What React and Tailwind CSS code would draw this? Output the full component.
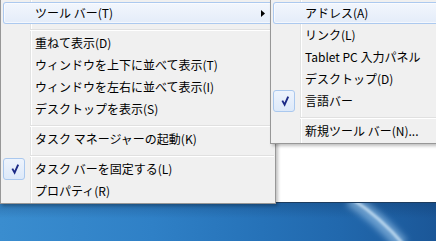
import React from "react";

const Check = () => (
  <div className="w-[22px] h-[22px] shrink-0 rounded-[3px] border border-[#aac8ee] bg-[linear-gradient(to_bottom,#eef4fd,#dde9f9)] flex items-center justify-center">
    <svg width="20" height="20" viewBox="0 0 20 20">
      <path d="M8.3 9.6 L10.6 13.6 L14.2 5.6" fill="none" stroke="#1c2a86" strokeWidth="1.9" strokeLinejoin="miter" />
    </svg>
  </div>
);

const Item = ({ label, checked, hl, arrow }) => (
  <div
    className={
      "mx-[2px] h-[22px] flex items-center text-[12px] leading-none text-black " +
      (hl
        ? "rounded-[3px] bg-[linear-gradient(to_bottom,#f3f7fd,#e3ecf9)] shadow-[inset_0_0_0_1px_#acc9ef,inset_0_0_0_2px_rgba(255,255,255,0.6)]"
        : "")
    }
  >
    {checked ? <Check /> : <div className="w-[22px] shrink-0" />}
    <span className="ml-[10px] whitespace-nowrap flex-1">{label}</span>
    {arrow && (
      <svg width="4" height="7" viewBox="0 0 4 7" className="mr-[8px]">
        <path d="M0 0 L4 3.5 L0 7 Z" fill="#000" />
      </svg>
    )}
  </div>
);

const Sep = () => (
  <div className="h-[8px] pt-[5px] ml-[29px] mr-[1px]">
    <div className="h-px bg-[#e0e0e0]" />
    <div className="h-px bg-white" />
  </div>
);

const menuBg =
  "bg-[#f0f0f0] bg-[linear-gradient(to_right,#f0f0f0_29px,#e2e3e3_29px,#e2e3e3_30px,#ffffff_30px,#ffffff_31px,#f0f0f0_31px)]";

export default function App() {
  return (
    <div className="relative w-[436px] h-[241px] overflow-hidden bg-white flex flex-col font-['Noto_Sans_CJK_JP','Noto_Sans',sans-serif]">
      <div className="flex-1" />
      <div className="h-[39px] border-t border-[#1d3c5e] bg-[linear-gradient(to_right,#3a8dcf_0%,#2f80c6_35%,#2672b8_60%,#2168ad_78%,#1b5798_100%)]">
        <svg width="436" height="38" viewBox="0 0 436 38" className="block">
          <defs>
            <linearGradient id="v" x1="0" y1="0" x2="0" y2="1">
              <stop offset="0" stopColor="#0a2a55" stopOpacity="0.25" />
              <stop offset="0.4" stopColor="#0a2a55" stopOpacity="0" />
            </linearGradient>
            <filter id="b" x="-50%" y="-50%" width="200%" height="200%">
              <feGaussianBlur stdDeviation="3" />
            </filter>
            <filter id="b2" x="-50%" y="-50%" width="200%" height="200%">
              <feGaussianBlur stdDeviation="1.2" />
            </filter>
          </defs>
          <rect width="436" height="38" fill="url(#v)" />
          <path d="M350 -4 Q378 14 402 42" fill="none" stroke="#a9d2f2" strokeOpacity="0.55" strokeWidth="14" filter="url(#b)" />
          <path d="M352 -4 Q380 14 404 42" fill="none" stroke="#d8ecfb" strokeOpacity="0.7" strokeWidth="3" filter="url(#b2)" />
        </svg>
      </div>

      {/* main context menu */}
      <div
        className={
          "absolute left-0 top-[-1px] w-[276px] border border-[#979797] pt-[2px] pb-[1px] shadow-[2px_2px_3px_rgba(0,0,0,0.25)] " +
          menuBg
        }
      >
        <Item label="ツール バー(T)" hl arrow />
        <Sep />
        <Item label="重ねて表示(D)" />
        <Item label="ウィンドウを上下に並べて表示(T)" />
        <Item label="ウィンドウを左右に並べて表示(I)" />
        <Item label="デスクトップを表示(S)" />
        <Sep />
        <Item label="タスク マネージャーの起動(K)" />
        <Sep />
        <Item label="タスク バーを固定する(L)" checked />
        <Item label="プロパティ(R)" />
      </div>

      {/* submenu */}
      <div
        className={
          "absolute left-[270px] top-[-1px] w-[200px] border border-[#979797] pt-[2px] pb-[1px] shadow-[2px_2px_3px_rgba(0,0,0,0.25)] " +
          menuBg
        }
      >
        <Item label="アドレス(A)" hl />
        <Item label="リンク(L)" />
        <Item label="Tablet PC 入力パネル" />
        <Item label="デスクトップ(D)" />
        <Item label="言語バー" checked />
        <Sep />
        <Item label="新規ツール バー(N)..." />
      </div>
    </div>
  );
}
